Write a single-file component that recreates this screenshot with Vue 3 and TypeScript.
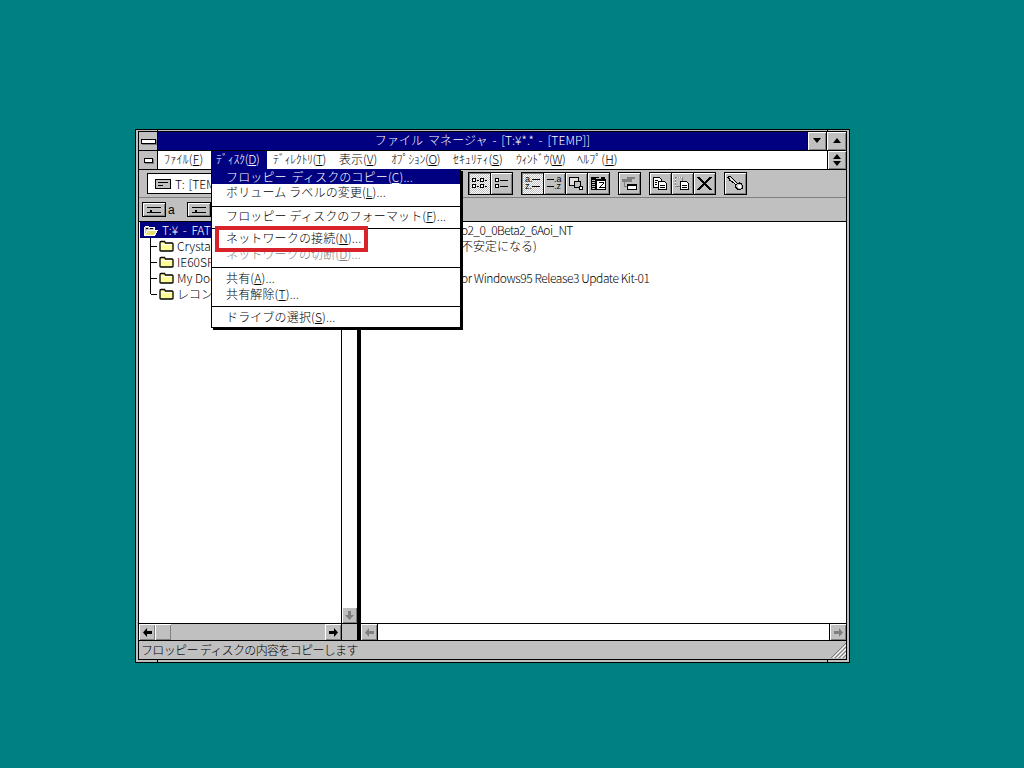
<template>
  <div class="desktop">
    <div class="window">
      <span class="tick tick-tl"></span>
      <span class="tick tick-tr"></span>
      <span class="tick tick-bl"></span>
      <span class="tick tick-br"></span>

      <div class="inner">
        <div class="titlebar">
          <button class="sys-btn"><span class="sys-dash"></span></button>
          <div class="title-text">ファイル マネージャ - [T:¥*.* - [TEMP]]</div>
          <button class="cap-btn"><svg width="10" height="6" viewBox="0 0 10 6"><path d="M1 0h8L5 5z" /></svg></button>
          <button class="cap-btn wide"><svg width="10" height="6" viewBox="0 0 10 6"><path d="M5 0l4 5H1z" /></svg></button>
        </div>

        <div class="menubar">
          <button class="sys-btn child"><span class="sys-dash small"></span></button>
          <div
            v-for="m in menus"
            :key="m.label"
            class="menu-item"
            :class="{ open: m.open }"
            :style="{ width: m.width + 'px', letterSpacing: m.track + 'px' }"
          >{{ m.label }}(<u>{{ m.key }}</u>)</div>
          <div class="spring"></div>
          <button class="cap-btn restore">
            <svg width="10" height="12" viewBox="0 0 10 12"><path d="M5 0l4 5H1zM5 12l4-5H1z" /></svg>
          </button>
        </div>

        <div class="toolbar">
          <div class="combo">
            <svg class="drive-icon" width="16" height="12" viewBox="0 0 16 12" shape-rendering="crispEdges">
              <rect x="0.5" y="1.5" width="15" height="9" fill="#c0c0c0" stroke="#000" />
              <path d="M3 4.500h10M3 7.500h5" stroke="#000" fill="none" />
            </svg>
            <span>T: [TEMP]</span>
          </div>
          <div v-for="(group, g) in toolGroups" :key="g" class="tool-group">
            <button v-for="tool in group" :key="tool.id" class="tool" :class="{ active: tool.active }">
              <svg width="17" height="17" viewBox="0 0 17 17" shape-rendering="crispEdges">
                <path
                  v-for="(p, i) in tool.paths"
                  :key="i"
                  :d="p.d"
                  :fill="p.fill || 'none'"
                  :stroke="p.stroke || 'none'"
                  :stroke-width="p.width || 1"
                />
                <text v-for="t in tool.labels" :key="t.s + t.y" :x="t.x" :y="t.y" class="tool-label">{{ t.s }}</text>
              </svg>
            </button>
          </div>
        </div>

        <div class="drivebar">
          <div class="drive">
            <button class="drive-btn"><span class="drive-slot"></span></button>
            <span class="drive-letter">a</span>
          </div>
          <div class="drive">
            <button class="drive-btn"><span class="drive-slot"></span></button>
            <span class="drive-letter">b</span>
          </div>
        </div>

        <div class="panes">
          <div class="tree">
            <div class="tree-rows">
              <div class="tree-root">
                <svg width="16" height="13" viewBox="0 0 16 13" shape-rendering="crispEdges">
                  <path d="M1.500 11.500v-8l1-1h3l1 1h5v2" fill="#c0c0c0" stroke="#fff" />
                  <path d="M3 4h2v1H3zM7 4h3v1H7z" fill="#000" />
                  <path d="M1.500 11.500l3-5h10l-3 5z" fill="#e8e070" stroke="#fff" />
                </svg>
                <span class="root-label">T:¥ - FAT</span>
              </div>
              <div v-for="(name, i) in folders" :key="name" class="tree-row" :class="{ last: i === folders.length - 1 }">
                <span class="branch"></span>
                <svg width="15" height="12" viewBox="0 0 15 12">
                  <path d="M1 10.500V2.500Q1 1.500 2 1.500h3.500l1 1.500H13Q14 3 14 4v6.500Q14 11 13 11H2Q1 11 1 10.500z" fill="#ffff99" stroke="#000" stroke-width="1.300" />
                  <path d="M2 4.500h11" stroke="#fff" />
                </svg>
                <span class="row-label">{{ name }}</span>
              </div>
            </div>
            <div class="vtrack">
              <button class="scroll-btn off"><svg width="9" height="9" viewBox="0 0 9 9"><path d="M3 0h3v4h3L4.500 9 0 4h3z" /></svg></button>
            </div>
          </div>
          <div class="list">
            <div
              v-for="row in listRows"
              :key="row.y"
              class="list-row"
              :style="{ paddingLeft: row.indent + 'px', letterSpacing: row.track + 'px' }"
            >{{ row.text }}</div>
          </div>
        </div>

        <div class="scrollbars">
          <div class="hscroll left-scroll">
            <button class="scroll-btn"><svg width="9" height="9" viewBox="0 0 9 9"><path d="M0 4.500L4 0v3h5v3H4v3z" /></svg></button>
            <button class="thumb"></button>
            <div class="spring"></div>
            <button class="scroll-btn"><svg width="9" height="9" viewBox="0 0 9 9"><path d="M9 4.500L5 0v3H0v3h5v3z" /></svg></button>
          </div>
          <div class="corner"></div>
          <div class="hscroll right-scroll">
            <button class="scroll-btn off"><svg width="9" height="9" viewBox="0 0 9 9"><path d="M0 4.500L4 0v3h5v3H4v3z" /></svg></button>
            <div class="spring white"></div>
            <button class="scroll-btn off"><svg width="9" height="9" viewBox="0 0 9 9"><path d="M9 4.500L5 0v3H0v3h5v3z" /></svg></button>
          </div>
        </div>

        <div class="statusbar">
          <span class="status-text">フロッピー ディスクの内容をコピーします</span>
          <svg class="grip" width="16" height="16" viewBox="0 0 16 16">
            <path d="M16 1L1 16M16 5L5 16M16 9L9 16M16 13L13 16" stroke="#808080" fill="none" />
            <path d="M16 3L3 16M16 7L7 16M16 11L11 16" stroke="#fff" fill="none" />
          </svg>
        </div>
      </div>

      <div class="dropdown">
        <template v-for="(item, i) in diskMenu" :key="i">
          <div v-if="item.sep" class="sep" :class="item.sep"></div>
          <div v-else class="drop-item" :class="{ selected: item.selected, disabled: item.disabled }">
            {{ item.label }}(<u>{{ item.key }}</u>)...
          </div>
        </template>
      </div>
      <div class="callout"></div>
    </div>
  </div>
</template>

<script setup lang="ts">
interface IconPath {
  d: string
  fill?: string
  stroke?: string
  width?: number
}

interface Tool {
  id: string
  active?: boolean
  paths: IconPath[]
  labels?: { s: string; x: number; y: number }[]
}

const menus = [
  { label: 'ﾌｧｲﾙ', key: 'F', width: 53, track: 0.2 },
  { label: 'ﾃﾞｨｽｸ', key: 'D', width: 56, open: true, track: -0.3 },
  { label: 'ﾃﾞｨﾚｸﾄﾘ', key: 'T', width: 66, track: -0.4 },
  { label: '表示', key: 'V', width: 52, track: 0 },
  { label: 'ｵﾌﾟｼｮﾝ', key: 'O', width: 62, track: -0.4 },
  { label: 'ｾｷｭﾘﾃｨ', key: 'S', width: 63, track: -0.1 },
  { label: 'ｳｨﾝﾄﾞｳ', key: 'W', width: 61, track: -0.6 },
  { label: 'ﾍﾙﾌﾟ', key: 'H', width: 50, track: 0.1 },
]

const diskMenu = [
  { label: 'フロッピー ディスクのコピー', key: 'C', selected: true },
  { label: 'ボリューム ラベルの変更', key: 'L' },
  { sep: 'gap-a' },
  { label: 'フロッピー ディスクのフォーマット', key: 'F' },
  { sep: 'gap-b' },
  { label: 'ネットワークの接続', key: 'N' },
  { label: 'ネットワークの切断', key: 'D', disabled: true },
  { sep: 'gap-c' },
  { label: '共有', key: 'A' },
  { label: '共有解除', key: 'T' },
  { sep: 'gap-d' },
  { label: 'ドライブの選択', key: 'S' },
]

const folders = ['Crystal', 'IE60SP1', 'My Documents', 'レコンパイル']

const listRows = [
  { y: 0, indent: 100, track: -0.6, text: 'o2_0_0Beta2_6Aoi_NT' },
  { y: 1, indent: 100, track: 0, text: '不安定になる)' },
  { y: 2, indent: 0, track: 0, text: '' },
  { y: 3, indent: 100, track: -0.43, text: 'or Windows95 Release3 Update Kit-01' },
]

const toolGroups: Tool[][] = [
  [
    {
      id: 'large',
      active: true,
      paths: [
        { d: 'M1.500 3.500h3v3h-3zM9.500 3.500h3v3h-3zM1.500 9.500h3v3h-3zM9.500 9.500h3v3h-3z', stroke: '#000', fill: '#fff', width: 1 },
        { d: 'M5.500 5.500h2.500M13.500 5.500h2.500M5.500 11.500h2.500M13.500 11.500h2.500', stroke: '#000' },
      ],
    },
    {
      id: 'small',
      paths: [
        { d: 'M2.500 3.500h3v3h-3zM2.500 9.500h3v3h-3z', stroke: '#000', fill: '#fff' },
        { d: 'M7 5.500h8M7 11.500h8', stroke: '#000' },
      ],
    },
  ],
  [
    {
      id: 'name',
      active: true,
      paths: [{ d: 'M8 4.500h8M8 11.500h8', stroke: '#000' }],
      labels: [
        { s: 'a.', x: 1, y: 7 },
        { s: 'z.', x: 1, y: 14 },
      ],
    },
    {
      id: 'type',
      paths: [{ d: 'M1 4.500h7M1 11.500h7', stroke: '#000' }],
      labels: [
        { s: '.a', x: 8, y: 7 },
        { s: '.z', x: 8, y: 14 },
      ],
    },
    {
      id: 'size',
      paths: [
        { d: 'M1.500 2.500h9v8h-9z', stroke: '#000', fill: '#e0e0e0' },
        { d: 'M6.500 6.500h6v6h-6z', stroke: '#000', fill: '#c0c0c0' },
        { d: 'M11.500 11.500h3v3h-3z', stroke: '#000', fill: '#fff' },
      ],
    },
    {
      id: 'date',
      paths: [
        { d: 'M1 2h8v1H1zM11 2h4v2h-4zM1 3h5v12H1z', fill: '#000' },
        { d: 'M6 4h10v11H6z', fill: '#000' },
        { d: 'M7 6h8v8H7z', fill: '#fff' },
        { d: 'M2 5h3M2 7h3M2 9h3M2 11h3M2 13h3', stroke: '#c0c0c0' },
        { d: 'M8.500 7.500h5v1l-4 4h5', stroke: '#000' },
      ],
    },
  ],
  [
    {
      id: 'connect',
      paths: [
        { d: 'M6 2h8v2H6z', fill: '#808080' },
        { d: 'M1 4h10v3H1z', fill: '#808080' },
        { d: 'M6.500 9.500h9v5h-9z', fill: '#fff', stroke: '#000' },
        { d: 'M6 9h10v2H6z', fill: '#000' },
        { d: 'M3 7v4h3', stroke: '#808080' },
      ],
    },
  ],
  [
    {
      id: 'copy',
      paths: [
        { d: 'M1.500 2.500h6l2 2v8h-8z', fill: '#fff', stroke: '#000' },
        { d: 'M6.500 6.500h6l2 2v6h-8z', fill: '#fff', stroke: '#000' },
        { d: 'M3 5.500h3M3 7.500h2M3 9.500h2M8 10.500h5M8 12.500h5', stroke: '#000' },
      ],
    },
    {
      id: 'move',
      paths: [
        { d: 'M1.500 2.500h7v9h-7z', stroke: '#808080' },
        { d: 'M3 2h1v1H3zM5 2h1v1H5zM7 2h1v1H7zM1 4h1v1H1zM1 7h1v1H1zM1 10h1v1H1z', fill: '#fff' },
        { d: 'M6.500 6.500h6l2 2v6h-8z', fill: '#fff', stroke: '#000' },
        { d: 'M8 10.500h5M8 12.500h5', stroke: '#000' },
      ],
    },
    {
      id: 'delete',
      paths: [{ d: 'M3 2l5.500 5L14 2h2l-6 6.500 6 6.500h-2.500l-5-5-5 5H1l6-6.500L1 2z', fill: '#000' }],
    },
  ],
  [
    {
      id: 'key',
      paths: [
        { d: 'M1.500 1.500h2l1 1 1 1 1 1 4 4 2-.5 2 1 1 2v2l-2 1.500h-2l-2-1-1-2 .5-2-4-3-2-1-1-2-1-1z', fill: '#c0c0c0', stroke: '#000' },
        { d: 'M11 10h3v3h-3z', fill: '#fff' },
        { d: 'M3 3l6 6', stroke: '#fff' },
      ],
    },
  ],
]
</script>

<style>
html,
body {
  margin: 0;
  overflow: hidden;
}
</style>

<style scoped>
.desktop {
  width: 1024px;
  height: 768px;
  background: #008080;
  padding: 129px 0 0 135px;
  box-sizing: border-box;
  font-family: "Noto Sans CJK JP", "Liberation Sans", sans-serif;
  font-size: 12px;
  font-weight: 300;
  line-height: 16px;
  color: #000;
}

.window {
  position: relative;
  width: 715px;
  height: 534px;
  box-sizing: border-box;
  border: 1px solid #000;
  background: #c0c0c0;
  padding: 1px 2px 2px 2px;
}

.tick {
  position: absolute;
  background: #000;
}

.tick-tl { left: 21px; top: 0; width: 1px; height: 2px; }
.tick-tr { right: 21px; top: 0; width: 1px; height: 2px; }
.tick-bl { left: 21px; bottom: 0; width: 1px; height: 2px; }
.tick-br { right: 21px; bottom: 0; width: 1px; height: 2px; }

.inner {
  height: 100%;
  box-sizing: border-box;
  border: 1px solid #000;
  display: flex;
  flex-direction: column;
}

button {
  padding: 0;
  margin: 0;
  font: inherit;
  box-sizing: border-box;
}

.titlebar {
  height: 19px;
  flex: none;
  display: flex;
  background: #000080;
  border-bottom: 1px solid #000;
  box-sizing: border-box;
}

.title-text {
  flex: 1;
  color: #fff;
  text-align: center;
  line-height: 15px;
  letter-spacing: 0.1px;
  word-spacing: 2px;
}

.sys-btn {
  width: 19px;
  flex: none;
  background: #c0c0c0;
  border: 0;
  border-right: 1px solid #000;
  display: flex;
  align-items: center;
  justify-content: center;
}

.sys-dash {
  width: 13px;
  height: 3px;
  background: #fff;
  border: 1px solid #000;
  box-shadow: 1px 1px 0 #808080;
}

.sys-dash.small {
  width: 7px;
}

.cap-btn {
  width: 19px;
  flex: none;
  background: #c0c0c0;
  border: 0;
  border-left: 1px solid #000;
  box-shadow: inset 1px 1px 0 #fff, inset -1px -1px 0 #808080;
  display: flex;
  align-items: center;
  justify-content: center;
}

.cap-btn.wide {
  width: 20px;
}

.menubar {
  height: 19px;
  flex: none;
  display: flex;
  background: #fff;
  border-bottom: 1px solid #000;
  box-sizing: border-box;
}

.menu-item {
  padding-left: 6px;
  box-sizing: border-box;
  flex: none;
  line-height: 15px;
  white-space: nowrap;
}

.menu-item.open {
  padding-left: 5px;
  background: #000080;
  color: #fff;
}

.spring {
  flex: 1;
}

.toolbar {
  height: 28px;
  flex: none;
  display: flex;
  align-items: center;
  padding-left: 8px;
  background: #c0c0c0;
  border-bottom: 1px solid #808080;
  box-sizing: border-box;
}

.combo {
  width: 313px;
  height: 21px;
  flex: none;
  box-sizing: border-box;
  background: #fff;
  border: 1px solid #000;
  display: flex;
  align-items: center;
  gap: 4px;
  padding-left: 7px;
  margin-right: 8px;
  word-spacing: 1px;
}

.tool-group {
  display: flex;
  margin-right: 9px;
}

.tool {
  width: 23px;
  height: 23px;
  background: #c0c0c0;
  border: 1px solid #000;
  margin-right: -1px;
  box-shadow: inset 1px 1px 0 #fff, inset -1px -1px 0 #808080;
  display: flex;
  align-items: center;
  justify-content: center;
}

.tool.active {
  background: repeating-conic-gradient(#fff 0 25%, #c0c0c0 0 50%) 0 0 / 2px 2px;
  box-shadow: inset 1px 1px 0 #808080;
}

.tool-label {
  font-family: "Liberation Sans", sans-serif;
  font-size: 9px;
}

.drivebar {
  height: 24px;
  flex: none;
  display: flex;
  align-items: center;
  gap: 12px;
  padding-left: 3px;
  background: #c0c0c0;
  border-bottom: 1px solid #000;
  box-sizing: border-box;
}

.drive {
  display: flex;
  align-items: center;
  gap: 2px;
}

.drive-btn {
  width: 24px;
  height: 15px;
  background: #c0c0c0;
  border: 1px solid #000;
  box-shadow: inset 1px 1px 0 #fff, inset -1px -1px 0 #808080;
  display: flex;
  align-items: center;
  justify-content: center;
}

.drive-slot {
  position: relative;
  width: 14px;
  height: 4px;
  border-top: 1px solid #000;
  border-bottom: 1px solid #000;
}

.drive-slot::after {
  content: "";
  position: absolute;
  left: 3px;
  top: 2px;
  width: 2px;
  height: 3px;
  background: #000;
}

.drive-letter {
  font-family: "Liberation Sans", sans-serif;
}

.panes {
  flex: 1;
  min-height: 0;
  display: flex;
  background: #fff;
  border-bottom: 1px solid #000;
}

.tree {
  width: 222px;
  flex: none;
  display: flex;
  box-sizing: border-box;
  border-right: 4px solid #000;
}

.tree-rows {
  flex: 1;
  min-width: 0;
  overflow: hidden;
  border-right: 1px solid #000;
}

.tree-root {
  height: 16px;
  display: flex;
  align-items: center;
  gap: 3px;
  padding-left: 3px;
  margin-left: 1px;
  background: #000080;
  color: #fff;
}

.root-label {
  word-spacing: 2px;
}

.tree-row {
  position: relative;
  height: 16px;
  display: flex;
  align-items: center;
  gap: 3px;
  padding-left: 20px;
  white-space: nowrap;
}

.branch {
  position: absolute;
  left: 11px;
  top: 0;
  width: 5px;
  height: 100%;
  border-left: 1px solid #000;
}

.branch::after {
  content: "";
  position: absolute;
  left: 0;
  top: 8px;
  width: 6px;
  border-top: 1px solid #000;
}

.tree-row.last .branch {
  height: 8px;
}

.vtrack {
  width: 15px;
  flex: none;
  display: flex;
  flex-direction: column;
  justify-content: flex-end;
  background: #fff;
}

.scroll-btn {
  width: 16px;
  height: 16px;
  flex: none;
  background: #c0c0c0;
  border: 0;
  box-shadow: inset 1px 1px 0 #fff, inset -1px -1px 0 #808080;
  display: flex;
  align-items: center;
  justify-content: center;
}

.scroll-btn.off svg {
  fill: #808080;
}

.vtrack .scroll-btn {
  width: 15px;
}

.list {
  flex: 1;
  min-width: 0;
  white-space: nowrap;
  overflow: hidden;
}

.list-row {
  height: 16px;
}

.scrollbars {
  height: 17px;
  flex: none;
  display: flex;
  background: #c0c0c0;
  border-bottom: 1px solid #000;
  box-sizing: border-box;
}

.hscroll {
  display: flex;
}

.left-scroll {
  width: 202px;
  flex: none;
  border-right: 1px solid #000;
  box-sizing: content-box;
}

.thumb {
  width: 16px;
  background: #c0c0c0;
  border: 0;
  box-shadow: inset 1px 1px 0 #fff, inset -1px -1px 0 #808080;
}

.corner {
  width: 15px;
  flex: none;
  border-right: 4px solid #000;
}

.right-scroll {
  flex: 1;
  min-width: 0;
}

.spring.white {
  background: #fff;
  border-left: 1px solid #000;
  border-right: 1px solid #000;
}

.statusbar {
  flex: none;
  height: 18px;
  display: flex;
  align-items: center;
  justify-content: space-between;
  padding-left: 2px;
  background: #c0c0c0;
}

.status-text {
  letter-spacing: -0.65px;
}

.grip {
  flex: none;
}

.dropdown {
  position: absolute;
  left: 75px;
  top: 39px;
  width: 250px;
  box-sizing: border-box;
  background: #fff;
  border: 1px solid #000;
  border-top: 0;
  box-shadow: 2px 2px 0 #000;
  padding-bottom: 2px;
}

.drop-item {
  height: 16px;
  line-height: 16px;
  padding-left: 14px;
  letter-spacing: 0.15px;
  white-space: nowrap;
}

.drop-item.selected {
  background: #000080;
  color: #fff;
  word-spacing: 2px;
  height: 15px;
}

.drop-item.disabled {
  color: #808080;
}

.sep {
  height: 1px;
  background: #000;
  margin: 3px 0 3px;
}

.sep.gap-a { margin: 6px 0 0; }
.sep.gap-a + .drop-item { height: 21px; line-height: 18px; }
.sep.gap-b { margin: 0 0 1px; }
.sep.gap-c { margin: 5px 0 2px; }
.sep.gap-d { margin: 4px 0 2px; }

.callout {
  position: absolute;
  left: 79px;
  top: 96px;
  width: 153px;
  height: 26px;
  box-sizing: border-box;
  border: 4px solid #d8232a;
}
</style>
